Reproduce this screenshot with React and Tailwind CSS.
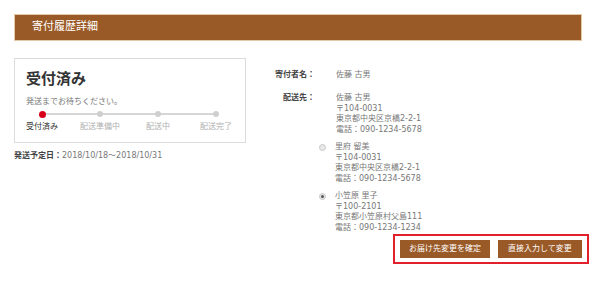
const FONT = { fontFamily: '"DejaVu Sans", "Noto Sans CJK JP", sans-serif' }

const STEPS = ['受付済み', '配送準備中', '配送中', '配送完了']

const ADDRESSES = [
  { name: '里府 留美', zip: '〒104-0031', addr: '東京都中央区京橋2-2-1', tel: '電話：090-1234-5678', checked: false },
  { name: '小笠原 里子', zip: '〒100-2101', addr: '東京都小笠原村父島111', tel: '電話：090-1234-1234', checked: true },
]

function Radio({ checked }) {
  return (
    <span className="mt-[1.5px] flex h-[7px] w-[7px] shrink-0 items-center justify-center rounded-full border border-[#c8c8c8] bg-[#e8e8e8]">
      {checked && <span className="h-[3px] w-[3px] rounded-full bg-[#555]" />}
    </span>
  )
}

function Address({ name, zip, addr, tel }) {
  return (
    <div className="text-[8px] leading-[10.5px] text-[#777]">
      <div>{name}</div>
      <div>{zip}</div>
      <div>{addr}</div>
      <div>{tel}</div>
    </div>
  )
}

export default function App() {
  return (
    <div className="h-[286px] w-[600px] bg-white pl-[14px] pt-[14px]" style={FONT}>
      {/* ヘッダー */}
      <div className="flex h-[27px] w-[568px] items-center border border-[#e2c9a8] bg-[#9a5a27] pl-[17px] text-[11px] text-white">
        寄付履歴詳細
      </div>

      <div className="flex">
        {/* 左カラム */}
        <div className="w-[232px] shrink-0 pt-[17px]">
          <div className="border border-[#dcdcdc] px-[11px] pb-[10px] pt-[11px]">
            <div className="text-[15px] font-bold leading-[18px] text-[#333]">受付済み</div>
            <div className="mt-[9px] text-[8px] leading-[10px] text-[#777]">発送までお待ちください。</div>
            <div className="relative ml-[-13px] mt-[3px] flex h-[8px] w-[232px]">
              <div className="absolute left-[29px] top-[3px] h-[1.5px] w-[174px] bg-[#d6d6d6]" />
              {STEPS.map((s, i) => (
                <div key={s} className="relative flex w-[58px] shrink-0 items-center justify-center">
                  <span className={i === 0 ? 'h-[7px] w-[7px] rounded-full bg-[#d8001a]' : 'h-[6px] w-[6px] rounded-full bg-[#cfcfcf]'} />
                </div>
              ))}
            </div>
            <div className="ml-[-13px] mt-[4px] flex w-[232px]">
              {STEPS.map((s, i) => (
                <div key={s} className={`w-[58px] shrink-0 text-center text-[8px] leading-[10px] ${i === 0 ? 'text-[#333]' : 'text-[#b0b0b0]'}`}>
                  {s}
                </div>
              ))}
            </div>
          </div>
          <div className="mt-[8px] text-[8px] leading-[10px]">
            <span className="font-bold text-[#444]">発送予定日：</span>
            <span className="text-[#777]">2018/10/18〜2018/10/31</span>
          </div>
        </div>

        {/* 右カラム */}
        <div className="ml-[15px] pt-[29px]">
          <div className="flex text-[8px] leading-[10px]">
            <div className="w-[54px] text-right font-bold text-[#444]">寄付者名：</div>
            <div className="ml-[21px] text-[#777]">佐藤 古男</div>
          </div>
          <div className="mt-[13px] flex">
            <div className="w-[54px] text-right text-[8px] font-bold leading-[10.5px] text-[#444]">配送先：</div>
            <div className="ml-[21px]">
              <Address name="佐藤 古男" zip="〒104-0031" addr="東京都中央区京橋2-2-1" tel="電話：090-1234-5678" />
            </div>
          </div>
          {ADDRESSES.map((a) => (
            <div key={a.name} className="ml-[58px] mt-[7px] flex gap-[9px]">
              <Radio checked={a.checked} />
              <Address {...a} />
            </div>
          ))}
          <div className="ml-[132px] mt-[1px] flex w-fit gap-[8px] border-2 border-[#e2202c] px-[5px] py-[4px]">
            <button className="h-[18px] w-[90px] bg-[#9a5a27] text-[8px] text-white">お届け先変更を確定</button>
            <button className="h-[18px] w-[84px] bg-[#9a5a27] text-[8px] text-white">直接入力して変更</button>
          </div>
        </div>
      </div>
    </div>
  )
}
